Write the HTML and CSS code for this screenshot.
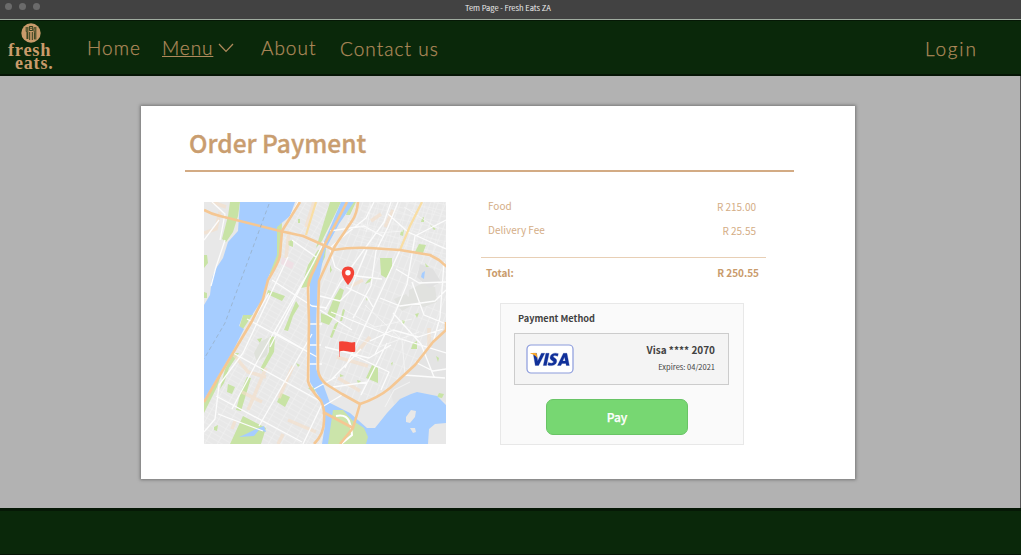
FILE: index.html
```html
<!DOCTYPE html>
<html lang="en">
<head>
<meta charset="utf-8">
<title>Tem Page - Fresh Eats ZA</title>
<link rel="stylesheet" href="styles.css">
</head>
<body>
<div class="window">
  <div class="titlebar"><div class="dots"><i></i><i></i><i></i></div><span class="window-title">Tem Page - Fresh Eats ZA</span></div>
  <header class="nav">
    <div class="logo">
      <svg class="logo-mark" viewBox="0 0 20 20"><circle cx="10" cy="10" r="9.7" fill="#c99b6b"/><g fill="none" stroke="#0a280a" stroke-width=".8"><path d="M5.2 4v4q0 1 .8 1.4V16M6.8 4v12M8.4 3.5h3.3v4H8.4zM8.7 9v8M11.3 9v8M13.4 4.2q-1 3 0 5.2v7M14.8 4v12.5"/><path d="M9.2 5.3h1.6"/></g></svg>
      <div class="logo-fresh">fresh</div><div class="logo-eats">eats.</div>
    </div>
    <a class="link home">Home</a>
    <a class="link menu">Menu</a>
    <svg class="chevron" viewBox="0 0 16 10"><path d="M1 1l7 7.4L15 1" fill="none" stroke="#b08a5b" stroke-width="1.3"/></svg>
    <a class="link about">About</a>
    <a class="link contact">Contact us</a>
    <a class="link login">Login</a>
  </header>
  <main class="page">
    <section class="card">
      <h1>Order Payment</h1>
      <div class="content">
        <svg class="map" viewBox="0 0 242 242">
          <defs>
            <pattern id="blocks" width="11" height="5" patternUnits="userSpaceOnUse" patternTransform="rotate(30)"><path d="M0 0H11M0 0V5" stroke="#f2f2f2" stroke-width="1.2" fill="none"/></pattern>
            <pattern id="streets" width="7" height="13" patternUnits="userSpaceOnUse" patternTransform="rotate(22)"><path d="M0 0H7M0 0V13" stroke="#f1f1f1" stroke-width="1.2" fill="none"/></pattern>
            <pattern id="suburb" width="9" height="6" patternUnits="userSpaceOnUse" patternTransform="rotate(12)"><path d="M0 0H9M0 0V6" stroke="#f1f1f1" stroke-width="1" fill="none"/></pattern>
          </defs>
          <rect width="242" height="242" fill="#e8e8e8"/>
          <path d="M91 0H142L108 80V180L121 201 118 242H0V198L48 118 73 53Z" fill="url(#blocks)"/>
          <path d="M150 0H242V130L186 186 156 202 114 172V90Z" fill="url(#streets)"/>
          <path d="M160 0H242V62L196 48 150 46Z" fill="url(#suburb)"/>
          <path d="M242 128L186 188 190 202 213 190 242 200Z" fill="#e4e4e4"/>
          <path d="M205 88l14-7 12 4 2 15-13 5-16-3zM190 97l12-5 8 10-12 7z" fill="#e1e2df"/>
          <path d="M216 62l13 5 8 13-12 6-12-11z" fill="#e0e0e0"/>
          <g fill="#c8e3a5">
            <path d="M26 0H36L34 14 29 30 22 40 18 37 24 14Z"/>
            <path d="M0 53l3 0 1 8-4 5zM0 90l3 1v5H0z"/>
            <path d="M73 23l5-2-1 30-9 22-3-1 5-23zM84 39l5-1 0 7-5-2zM94 17l2 0v4h-2z"/>
            <path d="M114 48l8-1-1 8-14 29-10 2 7-23zM126 0H137L118 39 112 46ZM146 0h6l-6 13h-4z"/>
            <path d="M39 113l10-1-10 15-4-1zM64 88l17 6-3 5-15-7zM92 99l3 5-6 10-5 15-4-1 6-15z"/>
            <path d="M66 134l5 1-1 15-11 19-3-2 9-17zM53 137l5-1-2 5zM35 151l-10 15-5 15-4 6 5-20 9-16z"/>
            <path d="M43 175l4 1-10 33-5-1 5-19zM77 191l9 4-5 10-8-5zM39 214l23 12-5 16H26zM24 182l7 3-3 7-5-2zM10 225l4-2-1 6-3-1zM0 198l18-28-5 15-13 26zM92 161l4 2-2 2z"/>
            <path d="M176 56h12v11l-6 9-5-3zM215 42l7 1-3 8-8-1zM197 29l3-1-1 6-3-1zM218 16l2-1 0 5-3 0zM226 23l6 4-2 1zM221 61l4 4-3 0z"/>
            <path d="M136 86l4 2-9 28-8-3 6-15zM117 111l12 5-4 7-8-3zM126 63l2 5-2 3zM139 107l2 1-3 11-2 0zM164 78l4-3-2 5-5 2zM162 97l2-2-1 4zM211 112l4-1-2 5z"/>
            <path d="M131 122l4-3-7 17-2-1zM168 163l6 3 0 15-12-5zM209 141l4-2 0 8-6 0zM178 140l2 2zM187 161l2-1-1 4zM232 154l3 2-1 4zM198 118l3 0-1 4-2 0zM235 191l5 1-2 4-5-1zM136 172l4 2-4 1zM153 178l4 1-3 3zM104 186l8-1-1 7z"/>
          </g>
          <path d="M78 55l12 6-2 6-11-5z" fill="#efe0e5"/>
          <path d="M56 140l9-5-2 18-10 7-3-9z" fill="#dfe2db"/>
          <g fill="#a6cdff">
            <path d="M36 0H91L86 14 73 25V53L64 76 58 98 48 113 39 113 35 124 40 127 29 149 0 198V103L6 93 8 76 11 68 19 56 24 40 34 29Z"/>
            <path d="M137 0h13L135 22 121 48 114 82 112 119 112 167 119 182 126 201 146 211 163 226H171L183 211 196 197 207 192 213 190 233 194 242 203V242H118L121 223 119 201 106 180 106 82 113 61 119 42Z"/>
            <path d="M50 228l10-4 2 6-7-2-5 6-15 1 7-3zM218 71l3-2-1 8-3-2z"/>
          </g>
          <path d="M124 242L129 208 139 208 148 218 160 226 164 235 162 242Z" fill="#cbe4aa"/>
          <path d="M132 214q10-2 13 5t3 14l-11 9" fill="none" stroke="#fff" stroke-width="2"/>
          <g fill="#e8e8e8"><path d="M207 208l5 1-1 6-5 6-4-1 0-5zM206 226l5 0 1 4-3 1zM242 221l-11 1-6 5-1 15h18z"/></g>
          <g fill="none" stroke="#f4dfca" stroke-width="3.5" opacity=".65">
            <path d="M0 31l12-4 4-17M8 0l14 5M30 153l14 17 18 5M62 166l-18 42M38 190l20 10M89 164l-14 32M84 218l28 12M79 232l-5 10M110 0l-8 25M85 29l-3 27M31 219l-3 8M181 25l8-17M159 78l-12 6M133 155l31 9M134 176l22 13M153 150l13-15M225 126v20M177 12l-10 7"/>
          </g>
          <g fill="none" stroke="#fcfcfc" stroke-width="1.3" stroke-linejoin="round">
            <path d="M21 38L12 65 7 84M0 38l15-20M8 0l13 12-5 26M88 38l24 17M94 0L78 30M84 55L39 151 15 183 11 217 0 230M110 60L54 158 28 207M120 40L66 145M108 132L55 224M118 202l-19 40M68 78l40 26 15 2M43 117l72 39M29 151l87 48M12 194l86 46M14 212l45 17M70 130l36 21M65 91L50 117M106 122h12M106 143h11M105 162h13M110 187l22-12M118 205l20-12"/>
            <path d="M116 94l20 5 10-10 17-41M127 45l15-13 20-16 8-16M126 48l5 17 13 8 34 4M187 0l-7 20-44 61-15 27M194 0l-10 25-12 24-5 35-18 32M184 12l20 18 38 17M180 35l-20-11-34 5M196 48l-22 48-15 32-18 38M242 18l-31 16-8 48-14 34-18 36M176 96l20 8 35-5 11-11M192 67l23 14 27-1M208 80l12 33 22 9M127 110l35 14 25 10 55 17M142 85l21 10 6 10M116 108l32 20M189 111l28 31 13 33M166 139l23-11 25 7 25-8M121 145l44 11 22-13M128 177l29-30M157 193l26-52M177 188l8-18-38-18M129 185l35-5M200 173l41 3M211 160l18 9 13-2M240 60l-4 55-7 26"/>
          </g>
          <g fill="none" stroke="#f6f6f6" stroke-width=".8"><path d="M161 103l37 35 3 35M141 108l30 17 37-8M129 127l46 18 40-15M144 20l30 11 25-2M200 5l35 22M167 2l-5 28M181 205l9-17 16-8"/></g>
          <path d="M218 0L206 24 196 48M112 0l-10 33" fill="none" stroke="#f9dea4" stroke-width="2.2"/>
          <g fill="none" stroke="#f5c793" stroke-width="2.6" stroke-linejoin="round">
            <path d="M0 8Q7 12 16 14L76 29 99 34 126 46 129 48Q147 45 166 46L196 48 226 53 235 58 243 65"/>
            <path d="M96 0L78 29 76 53Q75 60 64 78L59 97 48 119 29 151 13 178 0 200"/>
            <path d="M143 0L121 42 110 68Q104 78 104 87L105 120 104 179Q105 186 117 199 121 207 120 219 120 232 110 242"/>
            <path d="M154 0Q153 12 148 19L131 44 115 79 114 114 114 168Q115 178 125 184L138 192 156 202Q174 196 186 186L211 163 229 140 242 128M156 202L149 226 136 242M119 210L149 226M242 128v-8"/>
          </g>
          <path d="M65 2L21 121 0 157" fill="none" stroke="#9bb6d3" stroke-width="1" stroke-dasharray="4 3"/>
          <path d="M144 64.5c-3.9 0-6.2 2.8-6.2 6.2 0 4.7 6.2 12.3 6.2 12.3s6.2-7.6 6.2-12.3c0-3.4-2.3-6.2-6.2-6.2z" fill="#f44336"/><circle cx="144" cy="70.8" r="2.7" fill="#fff"/>
          <path d="M135.5 140v15" stroke="#f49a94" stroke-width="1"/><path d="M135.2 139.4q4-.6 8 .4t8 .3v9.6q-4 .6-8-.4t-8 .2z" fill="#f44336"/>
        </svg>
        <div class="summary">
          <div class="row food"><span>Food</span><span class="amount">R 215.00</span></div>
          <div class="row fee"><span>Delivery Fee</span><span class="amount">R 25.55</span></div>
          <div class="row total"><span>Total:</span><span>R 250.55</span></div>
          <div class="payment">
            <h2>Payment Method</h2>
            <div class="method">
              <svg class="visa" viewBox="0 0 48 30"><rect x="1" y="1" width="46" height="28" rx="4" fill="#fff" stroke="#8b9bdc" stroke-width="1.2"/><g fill="#10309a" stroke="#10309a" stroke-width=".3"><path d="M7.2 9.3h3.3l1.2 7.6 3.7-7.6h3.4L12.6 21.5H9.3z"/><path d="M19.9 9.3h3.2l-2.6 12.2h-3.2z"/><path d="M32.3 9.7l-.7 2.6c-2-1-4.1-.9-4.3.2-.2 1.3 3.7 1.5 3.4 4.8-.4 4.2-5.2 5-8.9 3.8l.7-2.7c2.2 1.1 4.7 1 5-.4.2-1.4-3.8-1.6-3.4-4.8.5-3.8 5-4.8 8.2-3.5z"/><path fill-rule="evenodd" d="M37.4 9.3h3.5l2.4 12.2h-3l-.4-2h-4l-1 2h-3.4zM38.5 13.1l-1.8 4h2.6z"/></g><path d="M4.4 8.9h4.8q1.4 0 1.6 1.2l.8 4.3Q8.7 10.4 4.4 9.5z" fill="#f7a62b"/></svg>
              <div class="details"><div class="number">Visa **** 2070</div><div class="expires">Expires: 04/2021</div></div>
            </div>
            <button class="pay">Pay</button>
          </div>
        </div>
      </div>
    </section>
  </main>
  <footer class="footer"></footer>
</div>
</body>
</html>
```
FILE: styles.css
```css
* { box-sizing: border-box; }
body { margin: 0; background: #fff; overflow: hidden; font-family: "Noto Sans CJK SC", "Noto Sans", sans-serif; }
.window { width: 1021px; height: 555px; display: flex; flex-direction: column; }
.titlebar { height: 20px; background: #424242; border-bottom: 1px solid #a0aca0; display: flex; align-items: flex-start; }
.dots { display: flex; gap: 7px; padding: 3px 0 0 5px; width: 465px; }
.dots i { width: 7px; height: 7px; border-radius: 50%; background: #6b6b6b; }
.window-title { color: #eee; font-size: 7.5px; line-height: 15px; white-space: nowrap; }
.nav { height: 56px; background: #0a280a; display: flex; align-items: flex-start; border-top: 1px solid #061806; border-bottom: 2px solid #051505; }
.logo { width: 87px; height: 53px; padding: 2px 0 0 8px; color: #c99b6b; font-family: "Liberation Serif", serif; font-weight: 700; }
.logo-mark { display: block; width: 20px; height: 20px; margin-left: 13px; }
.logo-fresh { font-size: 18.5px; line-height: 13px; margin-top: 1px; letter-spacing: .7px; }
.logo-eats { font-size: 18px; line-height: 12px; margin-left: 7px; letter-spacing: .8px; }
.link { color: #b08a5b; font-family: Lato, sans-serif; font-weight: 300; -webkit-text-stroke: .25px #b08a5b; font-size: 19px; line-height: 24px; padding-top: 15px; white-space: nowrap; }
.home { width: 75px; letter-spacing: 1px; }
.menu { width: 52px; text-decoration: underline; letter-spacing: .9px; }
.chevron { width: 16px; height: 10px; margin: 22px 27px 0 4px; }
.about { width: 79px; letter-spacing: 1px; }
.contact { width: 585px; padding-top: 16px; letter-spacing: 1.05px; }
.login { padding-top: 16px; letter-spacing: 1.8px; }
.page { height: 432px; background: #b2b2b2; border-right: 1px solid #555; padding: 30px 0 0 141px; }
.card { width: 714px; height: 373px; background: #fff; box-shadow: 0 0 3px 1px #777; padding: 18px 61px 0 44px; }
h1 { margin: 0; height: 48px; padding-left: 4px; border-bottom: 2px solid #d3ab84; color: #c99d6f; font-size: 24.5px; -webkit-text-stroke: .35px #c99d6f; font-weight: 500; line-height: 38px; }
.content { display: flex; padding: 30px 0 0 19px; }
.map { width: 242px; height: 242px; display: block; flex: none; }
.summary { width: 285px; margin-left: 35px; color: #d4ad86; font-size: 10px; }
.row { display: flex; justify-content: space-between; line-height: 16px; }
.food { padding: 0 10px 0 7px; height: 24px; margin-top: -4px; }
.fee { padding: 0 10px 0 7px; height: 35px; }
.amount { padding-top: 1px; }
.total { border-top: 1px solid #e8cfb5; padding: 7px 7px 0 5px; height: 46px; color: #c99b6b; font-weight: 600; }
.payment { width: 244px; height: 142px; margin-left: 19px; background: #fafafa; border: 1px solid #e8e8e8; padding: 6px 14px 0 13px; color: #424242; }
h2 { margin: 0; height: 23px; padding-left: 4px; font-size: 9.2px; line-height: 16px; font-weight: 600; }
.method { height: 52px; border: 1px solid #ccc; background: #f4f4f4; display: flex; justify-content: space-between; padding: 10px 13px 0 11px; }
.visa { width: 48px; height: 30px; }
.details { text-align: right; }
.number { font-size: 10px; line-height: 12px; font-weight: 600; }
.expires { font-size: 7.5px; line-height: 12px; margin-top: 5px; }
.pay { display: block; width: 142px; height: 36px; margin: 14px 0 0 32px; padding: 0; border: 1px solid #69c466; border-radius: 7px; background: #77d772; color: #fff; font: 500 12px/34px "Noto Sans CJK SC", sans-serif; -webkit-text-stroke: .25px #fff; }
.footer { flex: 1; background: #0a280a; border-top: 3px solid #061806; border-bottom: 1px solid #051505; }
```
